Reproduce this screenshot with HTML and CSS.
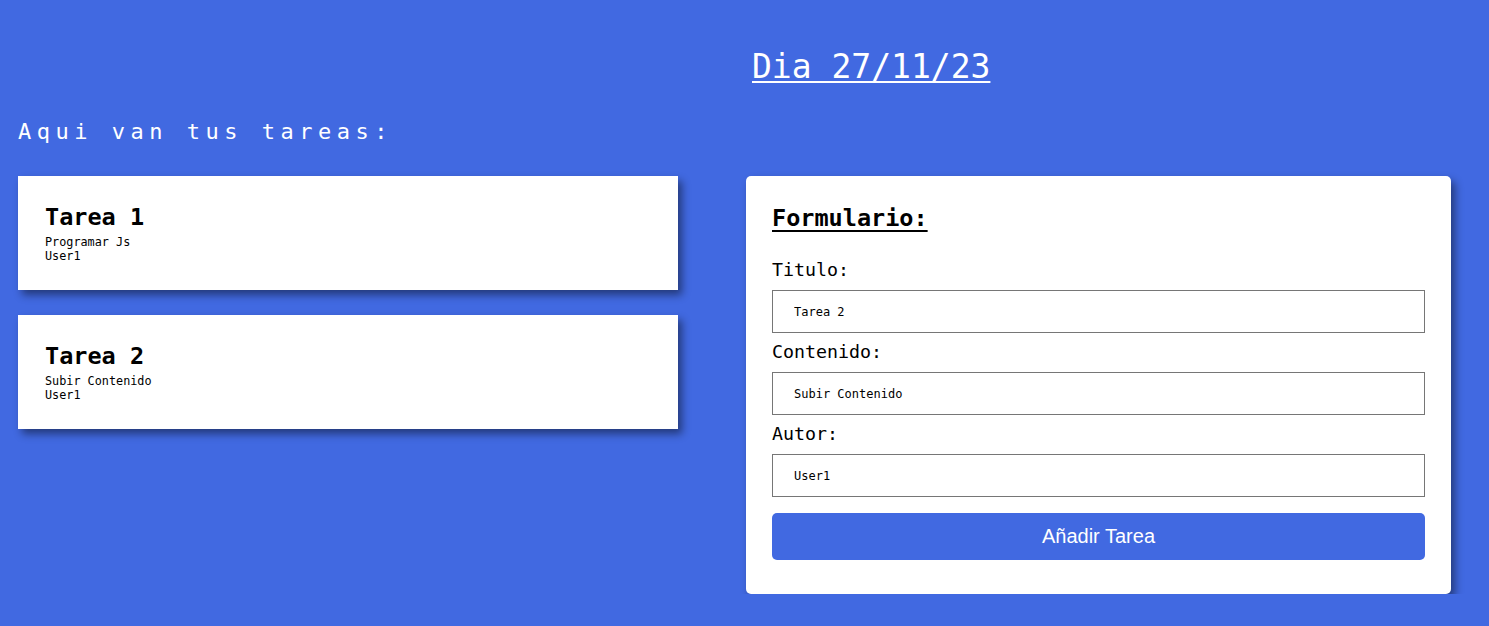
FILE: index.html
```html
<!DOCTYPE html>
<html lang="es">
<head>
<meta charset="utf-8">
<title>Tareas</title>
<link rel="stylesheet" href="styles.css">
</head>
<body>
<div class="page">
  <div class="header-row">
    <div></div>
    <h1 class="date">Dia 27/11/23</h1>
  </div>
  <h2 class="subtitle">Aqui van tus tareas:</h2>
  <div class="main">
    <div class="tasks">
      <div class="task">
        <h3 class="task-title">Tarea 1</h3>
        <p class="task-line">Programar Js</p>
        <p class="task-line">User1</p>
      </div>
      <div class="task">
        <h3 class="task-title">Tarea 2</h3>
        <p class="task-line">Subir Contenido</p>
        <p class="task-line">User1</p>
      </div>
    </div>
    <form class="form-card">
      <h3 class="form-title">Formulario:</h3>
      <label class="label">Titulo:</label>
      <input class="field" type="text" value="Tarea 2">
      <label class="label">Contenido:</label>
      <input class="field" type="text" value="Subir Contenido">
      <label class="label">Autor:</label>
      <input class="field" type="text" value="User1">
      <button class="submit" type="button">Añadir Tarea</button>
    </form>
  </div>
</div>
</body>
</html>
```
FILE: styles.css
```css
* { box-sizing: border-box; }
html, body {
  margin: 0;
  padding: 0;
  background: #4169e1;
}
body {
  font-family: "DejaVu Sans Mono", monospace;
  color: #000;
}
.page {
  padding: 0 38px 0 18px;
}
.header-row {
  display: grid;
  grid-template-columns: 660px 705px;
  column-gap: 68px;
  padding-top: 45px;
}
.date {
  margin: 0 0 0 6px;
  font-size: 33px;
  font-weight: normal;
  line-height: 44px;
  color: #fff;
  text-decoration: underline;
  text-underline-offset: 3px;
  text-decoration-thickness: 2px;
}
.subtitle {
  margin: 29px 0 0 0;
  font-size: 22px;
  font-weight: normal;
  letter-spacing: 5.5px;
  line-height: 28px;
  color: #fff;
}
.main {
  display: grid;
  grid-template-columns: 660px 705px;
  column-gap: 68px;
  margin-top: 30px;
  align-items: start;
}
.tasks {
  display: flex;
  flex-direction: column;
  gap: 25px;
}
.task {
  background: #fff;
  height: 114px;
  padding: 28px 27px;
  box-shadow: 4px 5px 8px rgba(0, 0, 0, 0.45);
}
.task-title {
  margin: 0 0 5px 0;
  font-size: 23.5px;
  line-height: 26px;
}
.task-line {
  margin: 0;
  font-size: 11.8px;
  line-height: 14px;
}
.form-card {
  background: #fff;
  border-radius: 5px;
  padding: 28px 26px 34px 26px;
  box-shadow: 4px 5px 9px rgba(0, 0, 0, 0.45);
  display: flex;
  flex-direction: column;
}
.form-title {
  margin: 0 0 26px 0;
  font-size: 23.5px;
  line-height: 28px;
  text-decoration: underline;
  text-underline-offset: 4px;
  text-decoration-thickness: 2px;
}
.label {
  font-size: 18.3px;
  line-height: 24px;
  margin-bottom: 8px;
}
.field {
  height: 43px;
  width: 100%;
  border: 1px solid #767676;
  border-radius: 0;
  padding: 0 21px;
  font-family: "DejaVu Sans Mono", monospace;
  font-size: 12px;
  color: #000;
  margin-bottom: 7px;
}
.submit {
  margin-top: 9px;
  height: 47px;
  border: none;
  border-radius: 5px;
  background: #4169e1;
  color: #fff;
  font-family: "Liberation Sans", Arial, sans-serif;
  font-size: 20px;
}
```
